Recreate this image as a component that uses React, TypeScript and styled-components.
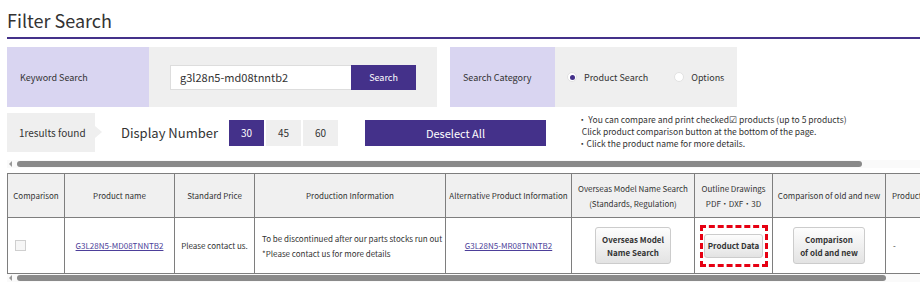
import styled, {createGlobalStyle} from "styled-components";

const GlobalStyle = createGlobalStyle`
  body {
    margin: 0;
    background: #ffffff;
    font-family: "Noto Sans CJK JP", "Noto Sans", sans-serif;
    color: #333333;
  }
`;

const PURPLE = "#44318a";
const LAVENDER = "#d9d5f1";
const GRAY = "#efefef";

const App = () => {
  return (
    <Page>
      <GlobalStyle />
      <Title>Filter Search</Title>

      <SearchRow>
        <Panel>
          <PanelLabel $width={142}>Keyword Search</PanelLabel>
          <PanelBody $width={288} $pad={21}>
            <KeywordInput defaultValue="g3l28n5-md08tnntb2" />
            <SearchButton>Search</SearchButton>
          </PanelBody>
        </Panel>
        <Panel>
          <PanelLabel $width={105}>Search Category</PanelLabel>
          <PanelBody $width={182} $pad={12}>
            <RadioItem>
              <Radio $checked />
              Product Search
            </RadioItem>
            <RadioItem>
              <Radio />
              Options
            </RadioItem>
          </PanelBody>
        </Panel>
      </SearchRow>

      <ResultRow>
        <ResultBox>1results found</ResultBox>
        <DisplayLabel>Display Number</DisplayLabel>
        <PageSizes>
          <SizeButton $active>30</SizeButton>
          <SizeButton>45</SizeButton>
          <SizeButton>60</SizeButton>
        </PageSizes>
        <DeselectButton>Deselect All</DeselectButton>
        <Notes>
          <li>・ You can compare and print checked☑ products (up to 5 products)</li>
          <li>&nbsp;&nbsp;Click product comparison button at the bottom of the page.</li>
          <li>・Click the product name for more details.</li>
        </Notes>
      </ResultRow>

      <ScrollBar thumb={845} top={8} />

      <TableWrap>
        <Table>
          <colgroup>
            <col style={{width: 57}} />
            <col style={{width: 110}} />
            <col style={{width: 80}} />
            <col style={{width: 191}} />
            <col style={{width: 126}} />
            <col style={{width: 123}} />
            <col style={{width: 78}} />
            <col style={{width: 113}} />
            <col style={{width: 120}} />
          </colgroup>
          <thead>
            <tr>
              <Th>Comparison</Th>
              <Th>Product name</Th>
              <Th>Standard Price</Th>
              <Th>Production Information</Th>
              <Th>Alternative Product Information</Th>
              <Th>Overseas Model Name Search<br />(Standards, Regulation)</Th>
              <Th>Outline Drawings<br />PDF・DXF・3D</Th>
              <Th>Comparison of old and new</Th>
              <Th $left>Product</Th>
            </tr>
          </thead>
          <tbody>
            <tr>
              <Td><CheckBox /></Td>
              <Td><ProductLink href="#">G3L28N5-MD08TNNTB2</ProductLink></Td>
              <Td>Please contact us.</Td>
              <Td $left>
                To be discontinued after our parts stocks run out<br />
                *Please contact us for more details
              </Td>
              <Td><ProductLink href="#">G3L28N5-MR08TNNTB2</ProductLink></Td>
              <Td><GrayButton>Overseas Model<br />Name Search</GrayButton></Td>
              <Td>
                <Highlight>
                  <GrayButton $small>Product Data</GrayButton>
                </Highlight>
              </Td>
              <Td><GrayButton>Comparison<br />of old and new</GrayButton></Td>
              <Td $left>-</Td>
            </tr>
          </tbody>
        </Table>
      </TableWrap>

      <ScrollBar thumb={869} top={0} />
    </Page>
  );
};

const ScrollBar = ({thumb, top}: {thumb: number; top: number}) => (
  <Track $top={top}>
    <TrackArrow />
    <Thumb style={{width: thumb}} />
  </Track>
);

const Page = styled.div`
  width: 920px;
  height: 286px;
  overflow: hidden;
`;

const Title = styled.h1`
  margin: 0 0 0 7px;
  padding: 8px 0 0 0;
  height: 39px;
  box-sizing: border-box;
  font-size: 18px;
  line-height: 24px;
  font-weight: 400;
  color: #333333;
  border-bottom: 2px solid ${PURPLE};
`;

const SearchRow = styled.div`
  display: flex;
  gap: 13px;
  margin: 8px 0 0 7px;
  height: 60px;
`;

const Panel = styled.div`
  display: flex;
`;

const PanelLabel = styled.div<{$width: number}>`
  width: ${p => p.$width}px;
  background: ${LAVENDER};
  display: flex;
  align-items: center;
  padding-left: 13px;
  box-sizing: border-box;
  font-size: 9px;
  color: #333333;
`;

const PanelBody = styled.div<{$width: number; $pad: number}>`
  width: ${p => p.$width}px;
  background: ${GRAY};
  display: flex;
  align-items: center;
  padding-left: ${p => p.$pad}px;
  box-sizing: border-box;
`;

const KeywordInput = styled.input`
  width: 181px;
  height: 25px;
  box-sizing: border-box;
  border: 1px solid #dddddd;
  border-right: none;
  padding: 0 9px;
  font-family: inherit;
  font-size: 11px;
  color: #333333;
  background: #ffffff;
  outline: none;
`;

const SearchButton = styled.button`
  width: 65px;
  height: 25px;
  border: none;
  background: ${PURPLE};
  color: #ffffff;
  font-family: inherit;
  font-size: 9px;
  padding: 0;
`;

const RadioItem = styled.label`
  display: flex;
  align-items: center;
  gap: 7px;
  font-size: 9px;
  color: #333333;
  white-space: nowrap;
  margin-right: 26px;
`;

const Radio = styled.span<{$checked?: boolean}>`
  width: 8px;
  height: 8px;
  border-radius: 50%;
  background: #ffffff;
  border: 1px solid #e2e2e2;
  display: inline-flex;
  align-items: center;
  justify-content: center;
  &::after {
    content: "";
    width: 5px;
    height: 5px;
    border-radius: 50%;
    background: ${p => (p.$checked ? PURPLE : "transparent")};
  }
`;

const ResultRow = styled.div`
  display: flex;
  align-items: center;
  margin: 6px 0 0 7px;
  height: 39px;
`;

const ResultBox = styled.div`
  position: relative;
  width: 88px;
  height: 39px;
  background: ${GRAY};
  display: flex;
  align-items: center;
  padding-left: 12px;
  box-sizing: border-box;
  font-size: 10px;
  color: #333333;
  &::after {
    content: "";
    position: absolute;
    right: -7px;
    top: 13px;
    border-left: 7px solid ${GRAY};
    border-top: 6px solid transparent;
    border-bottom: 6px solid transparent;
  }
`;

const DisplayLabel = styled.span`
  margin-left: 26px;
  font-size: 13px;
  color: #333333;
`;

const PageSizes = styled.div`
  display: flex;
  gap: 2px;
  margin-left: 11px;
`;

const SizeButton = styled.button<{$active?: boolean}>`
  width: 35px;
  height: 26px;
  border: none;
  padding: 0;
  font-family: inherit;
  font-size: 10px;
  background: ${p => (p.$active ? PURPLE : GRAY)};
  color: ${p => (p.$active ? "#ffffff" : "#333333")};
`;

const DeselectButton = styled.button`
  width: 181px;
  height: 26px;
  margin-left: 27px;
  border: none;
  padding: 0;
  background: ${PURPLE};
  color: #ffffff;
  font-family: inherit;
  font-size: 11px;
`;

const Notes = styled.ul`
  list-style: none;
  margin: -4px 0 0 32px;
  padding: 0;
  font-size: 8.5px;
  line-height: 12px;
  color: #333333;
  white-space: nowrap;
`;

const Track = styled.div<{$top: number}>`
  display: flex;
  align-items: center;
  margin: ${p => p.$top}px 0 0 7px;
  height: 8px;
  background: #fafafa;
`;

const TrackArrow = styled.span`
  margin-left: 2px;
  border-right: 3px solid #999999;
  border-top: 3px solid transparent;
  border-bottom: 3px solid transparent;
`;

const Thumb = styled.span`
  height: 6px;
  margin-left: 5px;
  border-radius: 3px;
  background: #8a8a8a;
`;

const TableWrap = styled.div`
  margin: 5px 0 0 7px;
  overflow: hidden;
`;

const Table = styled.table`
  border-collapse: collapse;
  table-layout: fixed;
  width: 998px;
  font-size: 8px;
  color: #333333;
`;

const Th = styled.th<{$left?: boolean}>`
  height: 43px;
  background: #f0f0f0;
  border: 1px solid #7e7e7e;
  font-weight: 400;
  line-height: 15px;
  text-align: ${p => (p.$left ? "left" : "center")};
  padding: 0 0 0 ${p => (p.$left ? "6px" : "0")};
  white-space: nowrap;
`;

const Td = styled.td<{$left?: boolean}>`
  height: 55px;
  background: #ffffff;
  border: 1px solid #7e7e7e;
  line-height: 15px;
  text-align: ${p => (p.$left ? "left" : "center")};
  padding: 0 0 0 ${p => (p.$left ? "7px" : "0")};
  white-space: nowrap;
`;

const CheckBox = styled.span`
  display: block;
  width: 9px;
  height: 9px;
  margin: 0 auto 0 7px;
  border: 1px solid #cfcfcf;
  background: #f6f6f6;
`;

const ProductLink = styled.a`
  color: #4d3f9a;
  text-decoration: underline;
`;

const Highlight = styled.div`
  margin: 0 auto;
  width: 62px;
  height: 36px;
  border: 3px dashed #e60012;
  display: flex;
  align-items: center;
  justify-content: center;
`;

const GrayButton = styled.button<{$small?: boolean}>`
  height: ${p => (p.$small ? "24px" : "37px")};
  padding: 0 ${p => (p.$small ? "3px" : "6px")};
  border: 1px solid #cccccc;
  border-radius: 3px;
  background: linear-gradient(#fdfdfd, #e3e3e3);
  font-family: inherit;
  font-size: 8px;
  font-weight: 700;
  line-height: 13px;
  color: #333333;
`;

export default App;
